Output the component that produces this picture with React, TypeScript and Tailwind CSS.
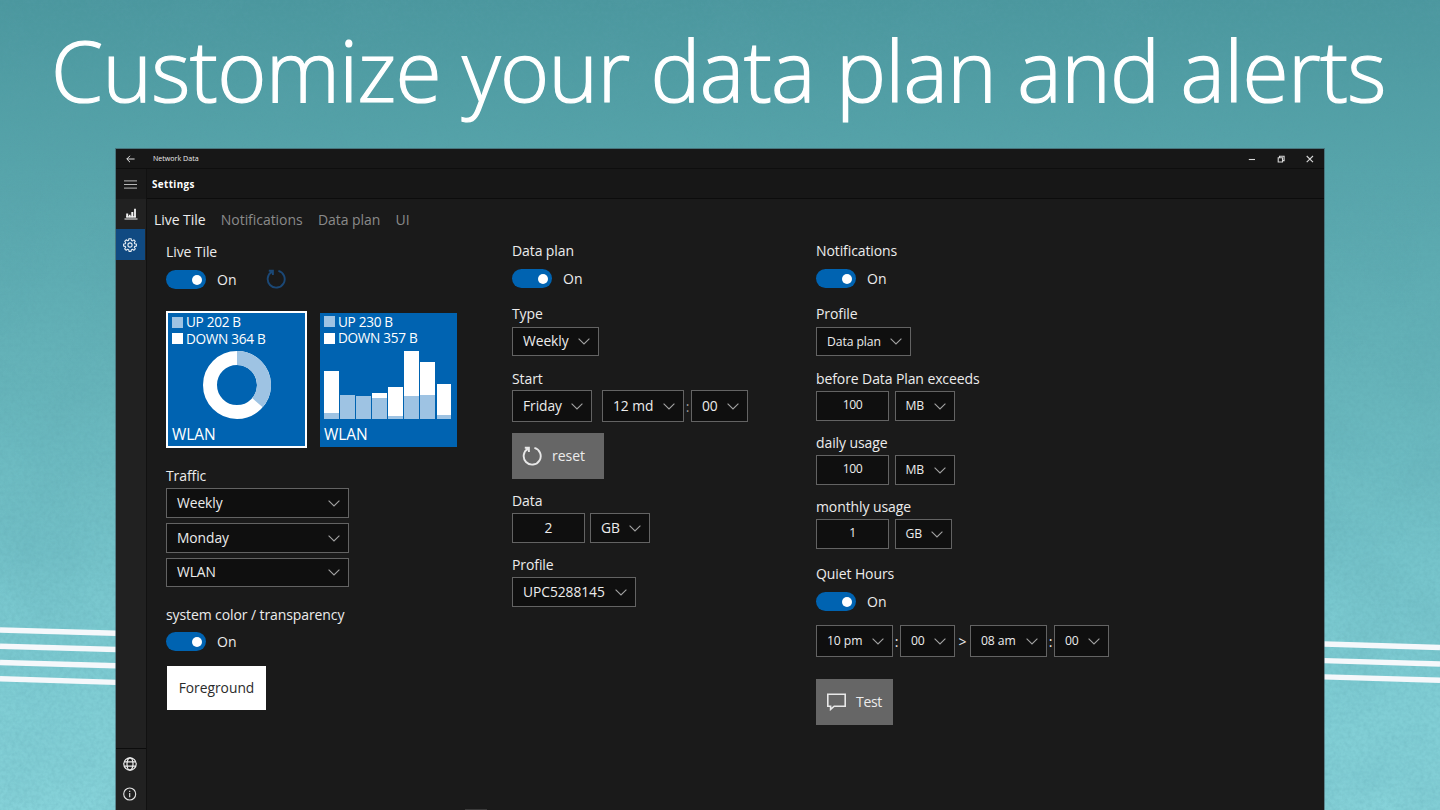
import type { ReactNode } from 'react';

const SANS = "font-['Open_Sans','Noto_Sans',sans-serif]";

function Backdrop() {
  return (
    <svg className="absolute inset-0" width="1440" height="810" viewBox="0 0 1440 810" aria-hidden>
      <defs>
        <linearGradient id="teal" x1="0" y1="0" x2="0" y2="1">
          <stop offset="0" stopColor="#4b979e" />
          <stop offset="0.2" stopColor="#56a4aa" />
          <stop offset="0.5" stopColor="#68b6bc" />
          <stop offset="0.75" stopColor="#7ac8cf" />
          <stop offset="1" stopColor="#87d3da" />
        </linearGradient>
        <filter id="grain" x="0" y="0" width="100%" height="100%">
          <feTurbulence type="fractalNoise" baseFrequency="0.25" numOctaves="4" seed="7" />
          <feColorMatrix values="0 0 0 0 0.1  0 0 0 0 0.35  0 0 0 0 0.4  0.5 0 0 0 -0.17" />
        </filter>
        <filter id="clouds" x="0" y="0" width="100%" height="100%">
          <feTurbulence type="fractalNoise" baseFrequency="0.012" numOctaves="4" seed="3" />
          <feColorMatrix values="0 0 0 0 0.1  0 0 0 0 0.35  0 0 0 0 0.4  0.8 0 0 0 -0.3" />
        </filter>
      </defs>
      <rect width="1440" height="810" fill="url(#teal)" />
      <rect width="1440" height="810" filter="url(#clouds)" opacity="0.4" />
      <rect width="1440" height="810" filter="url(#grain)" opacity="0.8" />
      <g stroke="#f5f8fb" strokeWidth="5.4">
        <path d="M0 630 116 633.2M0 646.2 116 649.5M0 662.5 116 665.8M0 678.8 116 682.4" />
        <path d="M1324 644 1440 647.5M1324 660.6 1440 664M1324 676.9 1440 680.2" />
      </g>
    </svg>
  );
}

function Chevron() {
  return (
    <svg className="shrink-0" width="12" height="7" viewBox="0 0 12 7" fill="none" stroke="#a2a2a2" strokeWidth="1.1">
      <path d="M.6.6 6 6 11.4.6" />
    </svg>
  );
}

function ResetIcon({ className }: { className: string }) {
  return (
    <svg className={className} width="20" height="20" viewBox="0 0 20 20" fill="none" stroke="currentColor" strokeWidth="1.9">
      <path d="M12.4 1.9A8.5 8.5 0 1 1 6.2 2.6M2.8 1.7H6.9V5.9" />
    </svg>
  );
}

function Select({ value, className, small }: { value: string; className: string; small?: boolean }) {
  return (
    <div className={`flex shrink-0 items-center justify-between border border-[#636363] bg-[#0f0f0f] pr-[8px] pl-[10px] ${className}`}>
      <span className={`whitespace-nowrap ${small ? 'pt-px text-[12.2px] tracking-[-0.1px]' : 'text-[13.8px] tracking-[-0.05px]'}`}>
        {value}
      </span>
      <Chevron />
    </div>
  );
}

function NumberBox({ value, small }: { value: string; small?: boolean }) {
  return (
    <div
      className={`flex h-[30px] w-[73px] shrink-0 items-center justify-center border border-[#636363] bg-[#0f0f0f] ${
        small ? 'pb-px text-[12.2px] tracking-[-0.4px]' : 'text-[13.8px]'
      }`}
    >
      {value}
    </div>
  );
}

function Label({ children, className = '' }: { children: ReactNode; className?: string }) {
  return <div className={`h-5 text-[14px] leading-5 tracking-[-0.1px] whitespace-nowrap ${className}`}>{children}</div>;
}

function Toggle({ className = '', children }: { className?: string; children?: ReactNode }) {
  return (
    <div className={`flex h-[19px] items-center ${className}`}>
      <div className="flex h-[19px] w-[40px] items-center justify-end rounded-full bg-[#0063b1] pr-[4px]">
        <div className="size-[10px] rounded-full bg-white" />
      </div>
      <span className="ml-[11px] text-[14px] leading-5">On</span>
      {children}
    </div>
  );
}

function Legend({ up, down }: { up: string; down: string }) {
  return (
    <div className="text-[13.6px] leading-[16.5px] tracking-[-0.3px] whitespace-nowrap">
      <div className="flex items-center gap-[3px]">
        <span className="size-[11px] bg-[#9ec3e3]" />
        UP {up}
      </div>
      <div className="flex items-center gap-[3px]">
        <span className="size-[11px] bg-white" />
        DOWN {down}
      </div>
    </div>
  );
}

// [total height, uploaded part]
const BARS: [number, number][] = [
  [48, 6],
  [24, 24],
  [22.5, 22.5],
  [26, 21],
  [31.5, 2.5],
  [68, 23],
  [57, 24],
  [35, 3.5],
];

function Tiles() {
  return (
    <div className="mt-[22px] flex h-[137px] items-center gap-[13px] text-white">
      <div className="flex h-[137px] w-[141px] flex-col border-2 border-white bg-[#0063b1] px-1 pt-px">
        <Legend up="202 B" down="364 B" />
        <svg className="mt-[4px] ml-[31px]" width="68" height="68" viewBox="0 0 68 68" fill="none" strokeWidth="14">
          <circle cx="34" cy="34" r="27" stroke="#fff" />
          <path d="M34 7A27 27 0 0 1 54.4 51.7" stroke="#9ec3e3" />
        </svg>
        <div className="mt-[5px] text-[15.5px] leading-5 tracking-[-0.1px]">WLAN</div>
      </div>
      <div className="flex h-[134px] w-[137px] flex-col bg-[#0063b1] px-1 pt-px">
        <Legend up="230 B" down="357 B" />
        <div className="mt-[3px] flex h-[69px] items-end gap-[1.4px]">
          {BARS.map(([total, up], i) => (
            <div key={i} className="flex w-[14.7px] flex-col justify-end bg-white" style={{ height: total }}>
              <div className="bg-[#9ec3e3]" style={{ height: up }} />
            </div>
          ))}
        </div>
        <div className="mt-[5px] text-[15.5px] leading-5 tracking-[-0.1px]">WLAN</div>
      </div>
    </div>
  );
}

function LiveTileColumn() {
  return (
    <div className="w-[346px] pt-[3px]">
      <Label>Live Tile</Label>
      <Toggle className="mt-[8px]">
        <ResetIcon className="mb-px ml-[30px] text-[#1b4876]" />
      </Toggle>
      <Tiles />
      <Label className="mt-[18px]">Traffic</Label>
      <div className="mt-[2px] flex flex-col gap-[5px]">
        <Select value="Weekly" className="h-[30px] w-[183px]" />
        <Select value="Monday" className="h-[30px] w-[183px]" />
        <Select value="WLAN" className="h-[29px] w-[183px]" />
      </div>
      <Label className="mt-[18px]">system color / transparency</Label>
      <Toggle className="mt-[7px]" />
      <div className="mt-[15px] ml-px flex h-[44px] w-[99px] items-center justify-center bg-white text-[13.8px] text-[#2b2b2b]">
        Foreground
      </div>
    </div>
  );
}

function DataPlanColumn() {
  return (
    <div className="w-[304px] pt-[2px]">
      <Label>Data plan</Label>
      <Toggle className="mt-[8px]" />
      <Label className="mt-[16px]">Type</Label>
      <Select value="Weekly" className="mt-[3px] h-[29px] w-[87px]" />
      <Label className="mt-[13px]">Start</Label>
      <div className="mt-px flex items-center">
        <Select value="Friday" className="h-[32px] w-[80px]" />
        <Select value="12 md" className="ml-[10px] h-[32px] w-[82px]" />
        <span className="w-[7px] text-center text-[14px] text-[#999]">:</span>
        <Select value="00" className="h-[32px] w-[57px]" />
      </div>
      <button className="mt-[11px] flex h-[46px] w-[92px] items-center bg-[#666] pl-[10px] text-[14px]">
        <ResetIcon className="mr-[10px] text-[#e8e8e8]" />
        <span className="pb-px">reset</span>
      </button>
      <Label className="mt-[12px]">Data</Label>
      <div className="mt-[2px] flex gap-[5px]">
        <NumberBox value="2" />
        <Select value="GB" className="h-[30px] w-[60px]" />
      </div>
      <Label className="mt-[12px]">Profile</Label>
      <Select value="UPC5288145" className="mt-[2px] h-[30px] w-[124px]" />
    </div>
  );
}

function Limit({ label, value, unit }: { label: string; value: string; unit: string }) {
  return (
    <div className="h-[64px]">
      <Label>{label}</Label>
      <div className="mt-[2px] flex gap-[5.5px]">
        <NumberBox value={value} small />
        <Select value={unit} small className={unit === 'GB' ? 'h-[30px] w-[57px]' : 'h-[30px] w-[60px]'} />
      </div>
    </div>
  );
}

function NotificationsColumn() {
  return (
    <div className="pt-[2px]">
      <Label>Notifications</Label>
      <Toggle className="mt-[8px]" />
      <Label className="mt-[16px]">Profile</Label>
      <Select value="Data plan" small className="mt-[3px] h-[29px] w-[95px]" />
      <div className="mt-[13px]">
        <Limit label="before Data Plan exceeds" value="100" unit="MB" />
        <Limit label="daily usage" value="100" unit="MB" />
        <Limit label="monthly usage" value="1" unit="GB" />
      </div>
      <Label className="mt-[3px]">Quiet Hours</Label>
      <Toggle className="mt-[8px]" />
      <div className="mt-[14px] flex items-center text-[14px]">
        <Select value="10 pm" small className="h-[32px] w-[77px]" />
        <span className="w-[7px] text-center">:</span>
        <Select value="00" small className="h-[32px] w-[55px]" />
        <span className="w-[15px] text-center">&gt;</span>
        <Select value="08 am" small className="h-[32px] w-[77px]" />
        <span className="w-[7px] text-center">:</span>
        <Select value="00" small className="h-[32px] w-[55px]" />
      </div>
      <button className="mt-[22px] flex h-[46px] w-[77px] items-center bg-[#666] pl-[11px] text-[14px]">
        <svg className="mr-[10px]" width="19" height="18" viewBox="0 0 19 18" fill="none" stroke="#e8e8e8" strokeWidth="1.6">
          <path d="M.8 1.2H18.2V13.2H7.2L3.6 16.4V13.2H.8Z" />
        </svg>
        <span className="pb-px tracking-[-0.3px]">Test</span>
      </button>
    </div>
  );
}

function TitleBar() {
  return (
    <div className="flex h-[20px] shrink-0 items-center border-b border-[#0e0e0e] bg-[#171717]">
      <svg className="ml-[10px]" width="9" height="8" viewBox="0 0 9 8" fill="none" stroke="#e0e0e0" strokeWidth="1">
        <path d="M8.6 4H.8M4 .8.8 4 4 7.2" />
      </svg>
      <span className="ml-[18px] text-[7.1px] leading-none font-medium">Network Data</span>
      <svg className="mr-[10px] ml-auto" width="66" height="8" viewBox="0 0 66 8" fill="none" stroke="#d8d8d8" strokeWidth="1.1">
        <path d="M.8 4.5H7" />
        <path d="M30.2 2.7H34.5V7H30.2ZM31.5 2.7V1.2H36.1V5.6H34.5" />
        <path d="M58.7 1 65 7.2M65 1 58.7 7.2" />
      </svg>
    </div>
  );
}

function Sidebar() {
  return (
    <nav className="flex w-[30px] shrink-0 flex-col bg-[#212121]">
      <div className="flex h-[30px] items-center justify-center bg-[#191919] pr-px">
        <svg width="13" height="9" viewBox="0 0 13 9" stroke="#b8b8b8" strokeWidth="1">
          <path d="M0 .9H13M0 4.5H13M0 8.1H13" />
        </svg>
      </div>
      <div className="flex h-[30px] items-center justify-center pr-px">
        <svg width="14" height="12" viewBox="0 0 14 12" fill="#f2f2f2">
          <path d="M.5 10.4h13v1.1H.5ZM2.2 5.6h2v3.6h-2ZM4.9 6.8h1.7v2.4H4.9ZM7.3 4h2v5.2h-2ZM10.1.8h1.8v8.4h-1.8Z" />
          <path d="M2.2 8.2h9.7v1.4H2.2Z" />
        </svg>
      </div>
      <div className="flex h-[31px] w-[29px] items-center justify-center bg-[#104a82] pr-px">
        <svg width="14" height="14" viewBox="0 0 14 14" fill="none" stroke="#e8eef4" strokeWidth="1.1">
          <path
            strokeLinejoin="round"
            d="M5.9.7H8.1L8.4 2.4 9.5 2.9 10.9 1.9 12.3 3.3 11.3 4.7 11.7 5.8 13.4 6.1V8.1L11.7 8.4 11.3 9.4 12.3 10.8 10.8 12.3 9.4 11.3 8.4 11.7 8.1 13.4H6L5.7 11.7 4.6 11.3 3.2 12.3 1.7 10.8 2.7 9.4 2.3 8.4.6 8.1V6L2.3 5.7 2.7 4.7 1.7 3.3 3.2 1.8 4.6 2.8 5.6 2.4Z"
          />
          <circle cx="7" cy="7" r="2.1" />
        </svg>
      </div>
      <div className="mt-auto border-t border-[#0c0c0c] pr-[2px]">
        <div className="flex h-[31px] items-center justify-center pb-px">
          <svg width="14" height="14" viewBox="0 0 14 14" fill="none" stroke="#ededed" strokeWidth="1.2">
            <circle cx="7" cy="7" r="6.2" />
            <ellipse cx="7" cy="7" rx="3" ry="6.2" />
            <path d="M1.3 4.8H12.7M1.3 9.2H12.7" />
          </svg>
        </div>
        <div className="flex h-[30px] items-center justify-center pb-[2px]">
          <svg width="14" height="14" viewBox="0 0 14 14" fill="none" stroke="#e4e4e4" strokeWidth="1.1">
            <circle cx="6.7" cy="7" r="6" />
            <path d="M6.7 5.9V10.3M6.7 3.7V4.9" />
          </svg>
        </div>
      </div>
    </nav>
  );
}

export default function App() {
  return (
    <div className={`relative h-[810px] w-[1440px] overflow-hidden text-[#ececec] ${SANS}`}>
      <Backdrop />
      <div className="relative flex h-full flex-col">
        <h1 className="h-[149px] shrink-0 pl-[51px] text-[84px] leading-[140px] font-light tracking-[-0.7px] whitespace-nowrap text-white [-webkit-text-stroke:1.2px_white]">
          Customize your data plan and alerts
        </h1>
        <div className="ml-[116px] flex h-[661px] w-[1208px] flex-col bg-[#1a1a1a] shadow-[0_0_0_1px_rgba(60,80,90,0.55)]">
          <TitleBar />
          <div className="flex min-h-0 grow">
            <Sidebar />
            <main className="flex min-w-0 grow flex-col border-l border-[#111]">
              <header className="flex h-[30px] shrink-0 items-center border-b border-[#0c0c0c] bg-[#171717] pt-[3px] pl-[5px] text-[9.8px] font-bold tracking-[0.4px] text-white">
                Settings
              </header>
              <div className="flex h-[40px] shrink-0 items-center gap-[15.3px] pl-[7px] text-[14px] tracking-[-0.05px] text-[#8a8a8a]">
                <span className="text-[#ececec]">Live Tile</span>
                <span>Notifications</span>
                <span>Data plan</span>
                <span>UI</span>
              </div>
              <div className="flex pl-[19px]">
                <LiveTileColumn />
                <DataPlanColumn />
                <NotificationsColumn />
              </div>
              <div className="mt-auto ml-[318px] h-px w-[22px] bg-[#3a3a3a]" />
            </main>
          </div>
        </div>
      </div>
    </div>
  );
}
